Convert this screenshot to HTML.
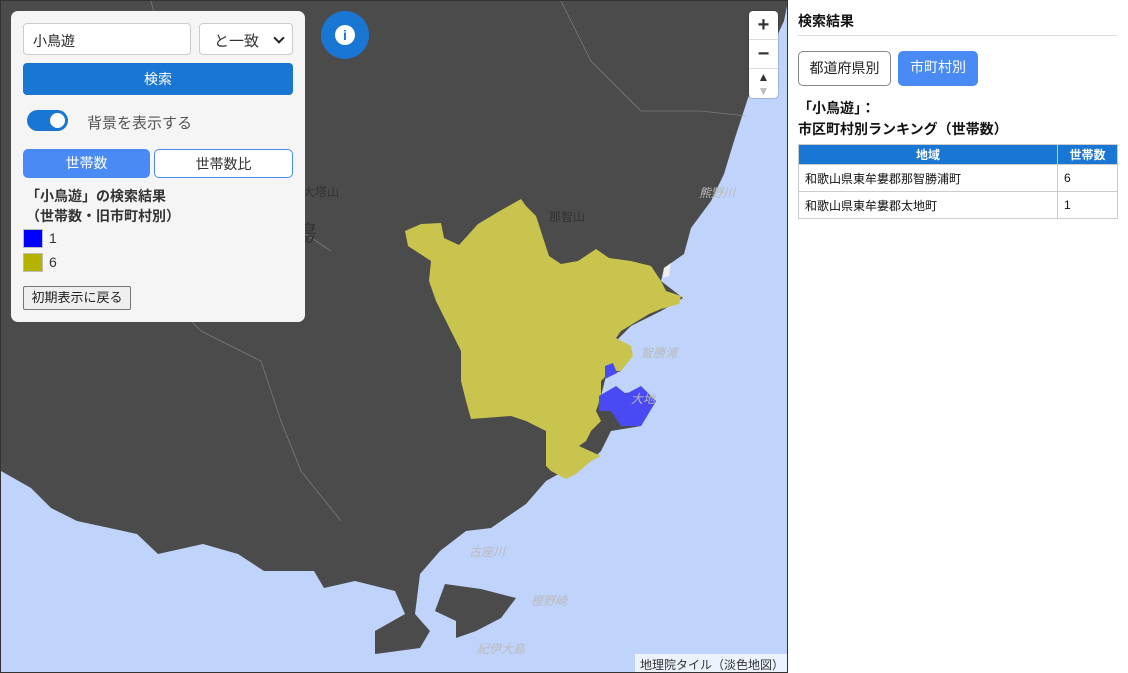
<!DOCTYPE html>
<html><head><meta charset="utf-8"><style>
*{box-sizing:border-box;margin:0;padding:0}
body{width:1128px;height:673px;overflow:hidden;font-family:"Liberation Sans","Noto Sans CJK JP",sans-serif;background:#fff;position:relative}
#map{position:absolute;left:0;top:0;width:788px;height:673px;background:#bfd3fb;border:1px solid #333;overflow:hidden}
svg{position:absolute;left:0;top:0}
.panel{position:absolute;left:10px;top:10px;width:294px;height:311px;background:#f5f5f5;border-radius:7px}
.inp{position:absolute;left:12px;top:12px;width:168px;height:32px;border:1px solid #ccc;border-radius:4px;background:#fff;font-size:14px;padding:7px 9px;color:#222}
.sel{position:absolute;left:188px;top:12px;width:94px;height:32px;border:1px solid #ccc;border-radius:4px;background:#fff;font-size:15px;padding:6px 0 0 14px;color:#333}
.sel:after{content:"";position:absolute;right:9px;top:10px;width:6px;height:6px;border-right:2px solid #222;border-bottom:2px solid #222;transform:rotate(45deg)}
.btn{position:absolute;left:12px;top:52px;width:270px;height:32px;background:#1976d2;border-radius:4px;color:#fff;font-size:14px;text-align:center;line-height:32px}
.tog{position:absolute;left:16px;top:99px;width:41px;height:21px;border-radius:11px;background:#1976d2}
.tog:after{content:"";position:absolute;right:3px;top:3px;width:15px;height:15px;border-radius:50%;background:#fff}
.togl{position:absolute;left:76px;top:101px;font-size:15px;color:#555}
.t1,.t2{position:absolute;top:138px;height:29px;border-radius:5px;font-size:14px;text-align:center;line-height:28px}
.t1{left:12px;width:127px;background:#4a8af4;color:#fff}
.t2{left:143px;width:139px;background:#fff;border:1px solid #4a8af4;color:#333}
.ttl{position:absolute;left:15px;top:175px;font-size:14px;font-weight:bold;color:#333;line-height:20px}
.sw{position:absolute;left:12px;width:20px;height:19px;border:1px solid #bbb}
.lg{position:absolute;left:38px;font-size:14px;color:#333}
.rst{position:absolute;left:12px;top:275px;width:108px;height:24px;border:1px solid #777;background:#efefef;border-radius:2px;font-size:13px;text-align:center;line-height:22px;color:#222}
.info{position:absolute;left:320px;top:10px;width:48px;height:48px;border-radius:50%;background:#1976d2;display:flex;align-items:center;justify-content:center}
.info span{width:20px;height:20px;border-radius:50%;background:#fff;color:#1976d2;font-weight:bold;font-size:14px;line-height:20px;text-align:center;font-family:"Liberation Sans",sans-serif}
.zc{position:absolute;left:748px;top:10px;width:29px;height:87px;background:#fff;border-radius:4px;box-shadow:0 0 0 1px rgba(0,0,0,.15)}
.zc div{height:29px;border-bottom:1px solid #ddd;text-align:center;font-size:20px;font-weight:bold;line-height:28px;color:#333}
.attr{position:absolute;left:634px;top:653px;width:152px;height:19px;background:rgba(255,255,255,.7);font-size:12px;color:#333;padding:2px 0 0 5px}
#side{position:absolute;left:788px;top:0;width:340px;height:673px;background:#fff}
.sh{position:absolute;left:10px;top:11px;font-size:14px;font-weight:bold;color:#111}
.hr{position:absolute;left:10px;top:35px;width:319px;height:1px;background:#ddd}
.b1,.b2{position:absolute;top:51px;height:35px;border-radius:5px;font-size:14px;text-align:center;line-height:33px}
.b1{left:10px;width:93px;border:1px solid #888;color:#222}
.b2{left:110px;width:80px;background:#4a8af4;color:#fff}
.st{position:absolute;left:10px;top:98px;font-size:14px;font-weight:bold;line-height:21px;color:#111}
table{position:absolute;left:10px;top:144px;width:320px;border-collapse:collapse;font-size:12px}
th{background:#1976d2;color:#fff;height:20px;border:1px solid #ccc;font-weight:bold}
td{height:27px;border:1px solid #ccc;padding-left:6px;color:#111}
</style></head><body>
<div id="map">
<svg width="788" height="673" viewBox="0 0 788 673">
<path fill="#4b4b4b" d="M0 0H787L783 20L747 97L733 140L723 173L710 200L690 227L683 253L663 267L660 280L682 297L660 310L630 325L615 340L630 350L620 370L605 375L600 395L640 390L655 400L640 425L610 430L600 450L590 460L570 475L563 470L545 480L525 503L490 527L465 530L439 550L419 573L414 613L429 630L419 647L374 653L374 630L404 613L394 590L354 580L323 587L313 570L263 570L237 553L202 543L157 553L136 533L76 520L50 507L30 487L0 470Z"/>
<path fill="#4b4b4b" d="M444 583L480 588L515 597L500 617L475 630L455 637L455 620L434 610Z"/>
<path fill="#c9c44d" d="M404 230L420 223L440 222L443 237L458 244L477 223L497 211L520 198L525 205L535 215L548 255L560 263L577 260L595 248L608 257L630 260L650 265L660 280L665 290L680 295L678 303L660 308L648 313L620 330L615 337L630 345L632 355L620 370L610 370L600 380L600 395L595 410L600 420L590 430L585 440L578 445L600 455L590 460L575 473L565 478L550 470L545 465L545 430L525 420L510 415L470 418L465 400L460 380L460 350L445 320L435 300L428 280L430 260L407 245Z"/>
<path fill="#4a4af5" d="M598 395L615 385L625 393L640 385L655 400L640 425L620 425L610 410L598 410Z"/>
<path fill="#4a4af5" d="M604 365L612 362L616 372L604 378Z"/>
<path fill="#eee" d="M663 267L670 262L668 275L662 277Z"/>
<g fill="none" stroke="#999" stroke-width="0.8" opacity="0.6"><path d="M150 0L160 40L210 60L240 120L230 160L260 200L300 230L330 250"/><path d="M40 200L80 230L150 280L200 330L260 360L280 420L300 470L340 520"/><path d="M560 0L590 60L640 110L700 110L745 115"/></g>
<g font-size="12" fill="#bbb" font-style="italic"><text x="698" y="196">熊野川</text><text x="640" y="356">智勝浦</text><text x="630" y="402">大地</text><text x="468" y="555">古座川</text><text x="530" y="604">樫野崎</text><text x="476" y="652">紀伊大島</text></g>
<g font-size="12" fill="#333"><text x="548" y="220">那智山</text><text x="302" y="195">大塔山</text><text x="292" y="240" font-size="22" font-style="italic">島</text></g>
</svg>
<div class="panel">
<div class="inp">小鳥遊</div>
<div class="sel">と一致</div>
<div class="btn">検索</div>
<div class="tog"></div><div class="togl">背景を表示する</div>
<div class="t1">世帯数</div><div class="t2">世帯数比</div>
<div class="ttl">「小鳥遊」の検索結果<br>（世帯数・旧市町村別）</div>
<div class="sw" style="top:218px;background:#0000ff"></div><div class="lg" style="top:219px">1</div>
<div class="sw" style="top:242px;background:#b4b400"></div><div class="lg" style="top:243px">6</div>
<div class="rst">初期表示に戻る</div>
</div>
<div class="info"><span>i</span></div>
<div class="zc"><div>+</div><div>−</div><div style="border:0;font-size:12px;line-height:14px;padding-top:1px">▲<br><span style="color:#bbb">▼</span></div></div>
<div class="attr">地理院タイル（淡色地図）</div>
</div>
<div id="side">
<div class="sh">検索結果</div><div class="hr"></div>
<div class="b1">都道府県別</div><div class="b2">市町村別</div>
<div class="st">「小鳥遊」：<br>市区町村別ランキング（世帯数）</div>
<table><tr><th>地域</th><th style="width:60px">世帯数</th></tr>
<tr><td>和歌山県東牟婁郡那智勝浦町</td><td>6</td></tr>
<tr><td>和歌山県東牟婁郡太地町</td><td>1</td></tr></table>
</div>
</body></html>
